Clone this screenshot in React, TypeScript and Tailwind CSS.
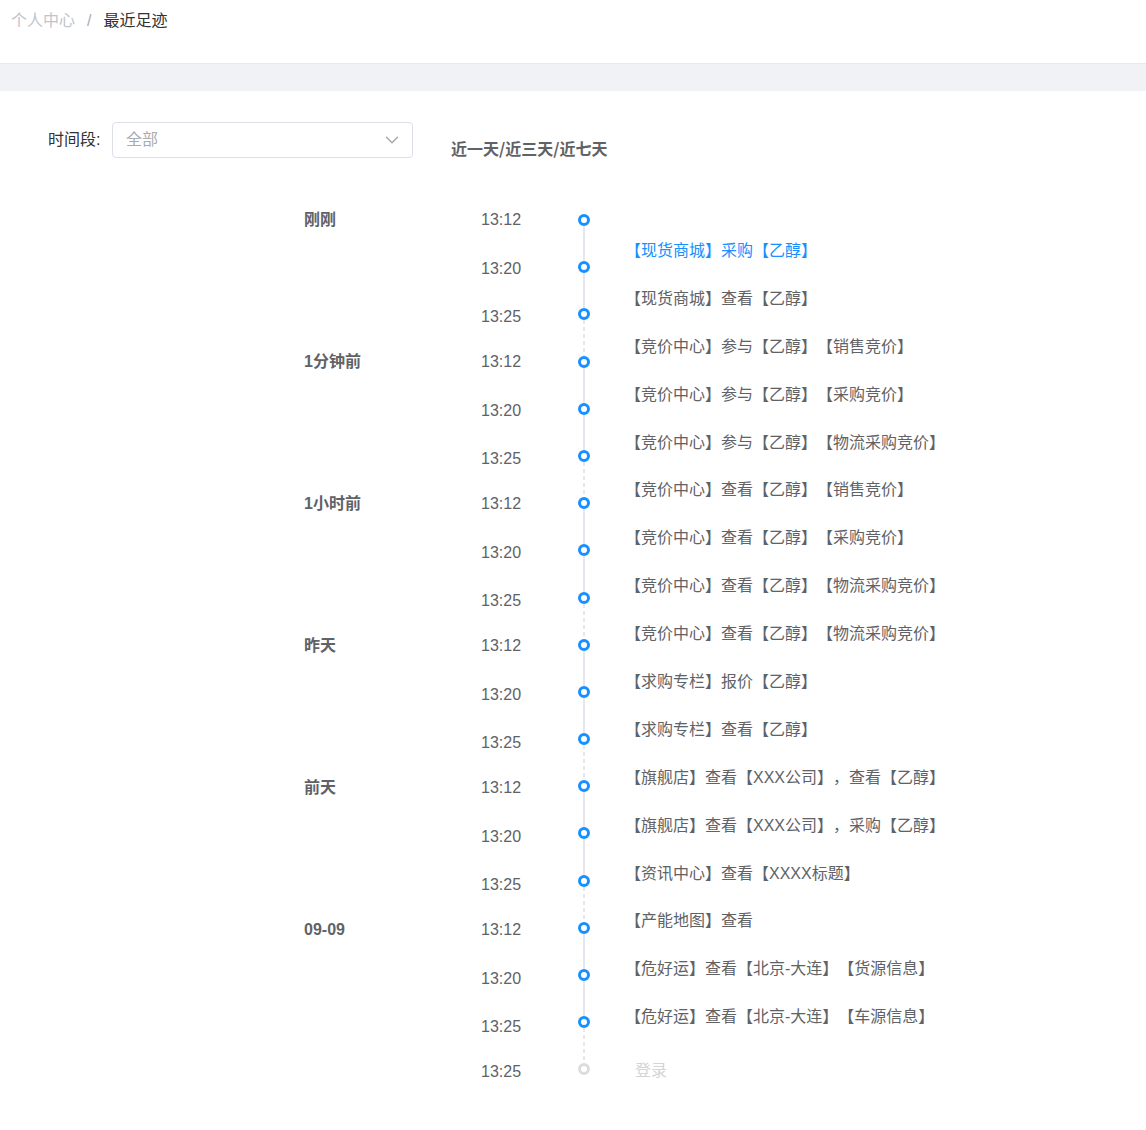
import React from "react";
import { ChevronDown } from "lucide-react";

const groups = [
  { label: "刚刚", times: ["13:12", "13:20", "13:25"] },
  { label: "1分钟前", times: ["13:12", "13:20", "13:25"] },
  { label: "1小时前", times: ["13:12", "13:20", "13:25"] },
  { label: "昨天", times: ["13:12", "13:20", "13:25"] },
  { label: "前天", times: ["13:12", "13:20", "13:25"] },
  { label: "09-09", times: ["13:12", "13:20", "13:25"] },
];

const actions = [
  "【现货商城】采购【乙醇】",
  "【现货商城】查看【乙醇】",
  "【竞价中心】参与【乙醇】【销售竞价】",
  "【竞价中心】参与【乙醇】【采购竞价】",
  "【竞价中心】参与【乙醇】【物流采购竞价】",
  "【竞价中心】查看【乙醇】【销售竞价】",
  "【竞价中心】查看【乙醇】【采购竞价】",
  "【竞价中心】查看【乙醇】【物流采购竞价】",
  "【竞价中心】查看【乙醇】【物流采购竞价】",
  "【求购专栏】报价【乙醇】",
  "【求购专栏】查看【乙醇】",
  "【旗舰店】查看【XXX公司】，查看【乙醇】",
  "【旗舰店】查看【XXX公司】，采购【乙醇】",
  "【资讯中心】查看【XXXX标题】",
  "【产能地图】查看",
  "【危好运】查看【北京-大连】【货源信息】",
  "【危好运】查看【北京-大连】【车源信息】",
];

// 18 dots in 6 groups of 3, then the grey "登录" dot
const dotCount = 18;

function Dot({ muted }: { muted?: boolean }) {
  return (
    <div
      className={
        muted
          ? "w-3 h-3 rounded-full border-[3px] border-[#dcdcdc] bg-white shrink-0"
          : "w-3 h-3 rounded-full border-[3px] border-[#1890ff] bg-white shrink-0"
      }
    />
  );
}

function Segment({ dashed }: { dashed: boolean }) {
  return dashed ? (
    <div className="w-[2px] h-[35.2px] bg-[repeating-linear-gradient(to_bottom,#e4e7ed_0px,#e4e7ed_4px,transparent_4px,transparent_7px)]" />
  ) : (
    <div className="w-[2px] h-[35.2px] bg-[#e4e7ed]" />
  );
}

export default function App() {
  return (
    <div className="min-h-[1130px] bg-white text-[16px] text-[#606266] font-['Liberation_Sans','Noto_Sans_CJK_SC',sans-serif] [text-spacing-trim:space-all]">
      {/* breadcrumb */}
      <div className="h-[63px] px-[11px] pt-[9px] leading-6 flex">
        <span className="text-[#c0c4cc]">个人中心</span>
        <span className="mx-3 text-[#a8abb2]">/</span>
        <span className="text-[#303133]">最近足迹</span>
      </div>
      <div className="h-[28px] bg-[#f0f2f5] border-t border-[#e6e8eb]" />

      {/* filter */}
      <div className="mt-[31px] pl-[48px] flex items-end">
        <div className="flex items-center h-[36px]">
          <span className="text-[#303133] w-[64px]">时间段:</span>
          <div className="w-[301px] h-[36px] border border-[#dcdfe6] rounded-[4px] flex items-center justify-between pl-[13px] pr-[9px]">
            <span className="text-[#a8abb2]">全部</span>
            <ChevronDown className="w-[22px] h-[22px] text-[#a0a3a8]" strokeWidth={1.4} />
          </div>
        </div>
        <span className="ml-[38px] leading-5 font-semibold text-[#606266] font-['Noto_Sans_CJK_SC',sans-serif]">
          近一天/近三天/近七天
        </span>
      </div>

      {/* timeline */}
      <div className="mt-[51px] pl-[304px] flex items-start">
        <div className="w-[274px] pt-px">
          {groups.map((g) => (
            <div key={g.label} className="flex mb-[25px]">
              <div className="w-[177px] leading-5 font-bold">{g.label}</div>
              <div className="flex flex-col gap-[28.5px]">
                {g.times.map((t, i) => (
                  <div key={i} className="leading-5 h-5">
                    {t}
                  </div>
                ))}
              </div>
            </div>
          ))}
          <div className="flex">
            <div className="w-[177px]" />
            <div className="leading-5 h-5">13:25</div>
          </div>
        </div>

        <div className="pt-[5px] flex flex-col items-center w-3">
          {Array.from({ length: dotCount }).map((_, i) => (
            <React.Fragment key={i}>
              <Dot />
              <Segment dashed={i % 3 === 2} />
            </React.Fragment>
          ))}
          <Dot muted />
        </div>

        <div className="ml-[35px] pt-[32px] flex flex-col gap-[27.9px]">
          {actions.map((a, i) => (
            <div
              key={i}
              className={i === 0 ? "leading-5 h-5 text-[#1890ff]" : "leading-5 h-5"}
            >
              {a}
            </div>
          ))}
          <div className="leading-5 h-5 mt-[6px] ml-[10px] text-[#d4d4d4]">登录</div>
        </div>
      </div>
    </div>
  );
}
